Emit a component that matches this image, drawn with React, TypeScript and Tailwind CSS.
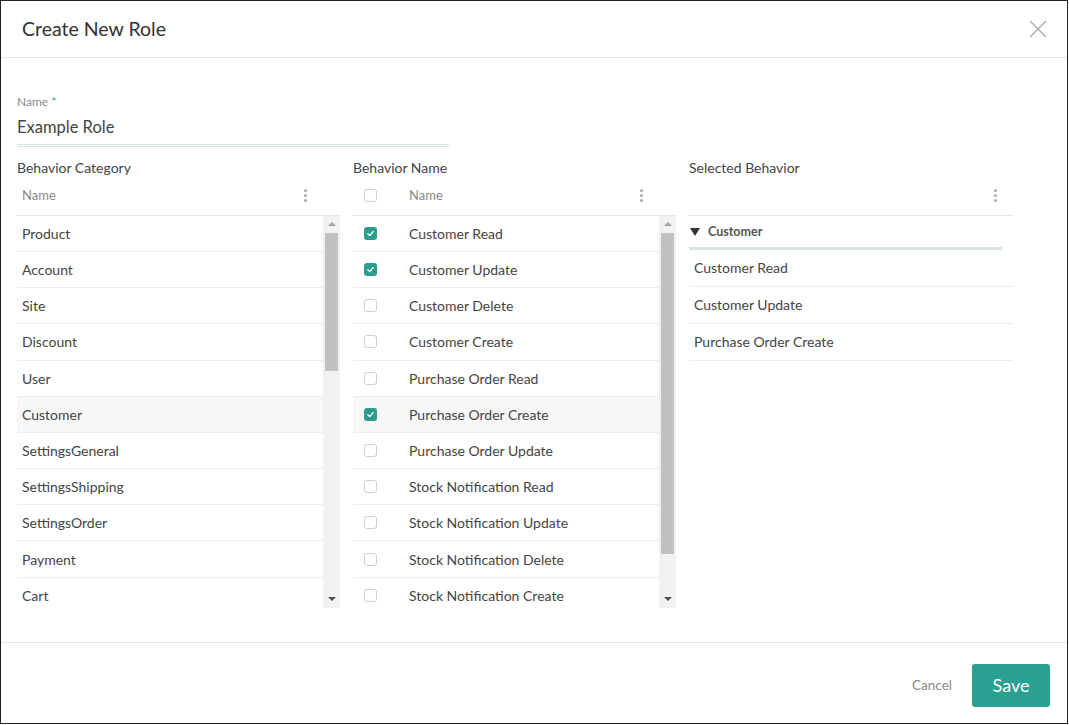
import { X } from "lucide-react";

const categories = [
  "Product",
  "Account",
  "Site",
  "Discount",
  "User",
  "Customer",
  "SettingsGeneral",
  "SettingsShipping",
  "SettingsOrder",
  "Payment",
  "Cart",
];

const behaviors = [
  { name: "Customer Read", checked: true },
  { name: "Customer Update", checked: true },
  { name: "Customer Delete", checked: false },
  { name: "Customer Create", checked: false },
  { name: "Purchase Order Read", checked: false },
  { name: "Purchase Order Create", checked: true },
  { name: "Purchase Order Update", checked: false },
  { name: "Stock Notification Read", checked: false },
  { name: "Stock Notification Update", checked: false },
  { name: "Stock Notification Delete", checked: false },
  { name: "Stock Notification Create", checked: false },
];

const selected = ["Customer Read", "Customer Update", "Purchase Order Create"];

function Kebab() {
  return (
    <div className="flex flex-col gap-[2px]">
      <span className="h-[3px] w-[3px] rounded-full bg-[#aaa]" />
      <span className="h-[3px] w-[3px] rounded-full bg-[#aaa]" />
      <span className="h-[3px] w-[3px] rounded-full bg-[#aaa]" />
    </div>
  );
}

function Checkbox({ checked }: { checked: boolean }) {
  if (checked) {
    return (
      <span className="flex h-[13px] w-[13px] items-center justify-center rounded-[3px] bg-[#2a9d8f]">
        <svg width="9" height="9" viewBox="0 0 10 10" fill="none">
          <path d="M2 5.2 L4.2 7.3 L8 2.8" stroke="white" strokeWidth="1.4" strokeLinecap="round" strokeLinejoin="round" />
        </svg>
      </span>
    );
  }
  return <span className="h-[13px] w-[13px] rounded-[3px] border border-[#cfcfcf] bg-white" />;
}

function Scrollbar({ thumbTop, thumbHeight }: { thumbTop: number; thumbHeight: number }) {
  return (
    <div className="relative w-[17px] bg-[#f1f1f1]">
      <div className="flex h-[17px] items-center justify-center">
        <span className="h-0 w-0 border-x-[4px] border-b-[4px] border-x-transparent border-b-[#a3a3a3]" />
      </div>
      <div
        className="absolute left-[2px] right-[2px] bg-[#c1c1c1]"
        style={{ top: thumbTop, height: thumbHeight }}
      />
      <div className="absolute bottom-0 left-0 flex h-[17px] w-full items-center justify-center">
        <span className="h-0 w-0 border-x-[4px] border-t-[4px] border-x-transparent border-t-[#505050]" />
      </div>
    </div>
  );
}

export default function App() {
  return (
    <div
      className="flex h-[724px] w-[1068px] flex-col border border-[#222] bg-white text-[#444]"
      style={{ fontFamily: "Lato, 'Noto Sans', sans-serif" }}
    >
      {/* header */}
      <div className="flex h-[57px] shrink-0 items-center justify-between border-b border-[#e6e6e6] pl-[21px] pr-[14px]">
        <h1 className="text-[19.5px] text-[#333]">Create New Role</h1>
        <X className="h-[30px] w-[30px] text-[#aaa]" strokeWidth={1.1} />
      </div>

      {/* body */}
      <div className="flex-1 px-[16px] pt-[30px]">
        <div className="w-[432px]">
          <label className="text-[12px] text-[#888]">
            Name <span className="text-[#2a9d8f]">*</span>
          </label>
          <div className="mt-[3px] border-b-[3px] border-double border-[#cfe7e6] pb-[4px] text-[16.5px] text-[#444]">
            Example Role
          </div>
        </div>

        <div className="mt-[10px] flex gap-[13px]">
          {/* Behavior Category */}
          <div className="w-[323px]">
            <div className="text-[14px] text-[#444]">Behavior Category</div>
            <div className="flex h-[38px] items-center justify-between border-b border-[#e6e6e6] pb-[2px] pl-[5px] pr-[33px] text-[13px] text-[#888]">
              <span>Name</span>
              <Kebab />
            </div>
            <div className="flex h-[392px]">
              <div className="flex-1 overflow-hidden">
                {categories.map((c) => (
                  <div
                    key={c}
                    className={`flex h-[36.2px] items-center border-b border-[#ececec] pl-[5px] text-[14px] text-[#444] ${
                      c === "Customer" ? "bg-[#f7f7f7]" : ""
                    }`}
                  >
                    {c}
                  </div>
                ))}
              </div>
              <Scrollbar thumbTop={17} thumbHeight={138} />
            </div>
          </div>

          {/* Behavior Name */}
          <div className="w-[323px]">
            <div className="text-[14px] text-[#444]">Behavior Name</div>
            <div className="flex h-[38px] items-center justify-between border-b border-[#e6e6e6] pb-[2px] pl-[11px] pr-[33px] text-[13px] text-[#888]">
              <div className="flex items-center gap-[32px]">
                <Checkbox checked={false} />
                <span>Name</span>
              </div>
              <Kebab />
            </div>
            <div className="flex h-[392px]">
              <div className="flex-1 overflow-hidden">
                {behaviors.map((b) => (
                  <div
                    key={b.name}
                    className={`flex h-[36.2px] items-center gap-[32px] border-b border-[#ececec] pl-[11px] text-[14px] text-[#444] ${
                      b.name === "Purchase Order Create" ? "bg-[#f7f7f7]" : ""
                    }`}
                  >
                    <Checkbox checked={b.checked} />
                    <span>{b.name}</span>
                  </div>
                ))}
              </div>
              <Scrollbar thumbTop={17} thumbHeight={321} />
            </div>
          </div>

          {/* Selected Behavior */}
          <div className="w-[324px]">
            <div className="text-[14px] text-[#444]">Selected Behavior</div>
            <div className="flex h-[38px] items-center justify-end border-b border-[#e6e6e6] pb-[2px] pr-[16px]">
              <Kebab />
            </div>
            <div className="mr-[11px] flex h-[34px] items-center gap-[8px] border-b-[3px] border-[#d8e2e2] pl-[1px] pt-[2px] text-[12.5px] font-bold text-[#555]">
              <span className="h-0 w-0 border-x-[5px] border-t-[8px] border-x-transparent border-t-[#333]" />
              Customer
            </div>
            {selected.map((s) => (
              <div
                key={s}
                className="flex h-[37px] items-center border-b border-[#ececec] pl-[5px] text-[14px] text-[#444]"
              >
                {s}
              </div>
            ))}
          </div>
        </div>
      </div>

      {/* footer */}
      <div className="flex h-[81px] shrink-0 items-center justify-end gap-[20px] border-t border-[#e6e6e6] pr-[17px] pt-[4px]">
        <button className="text-[13.5px] text-[#888]">Cancel</button>
        <button className="h-[43px] w-[78px] rounded-[3px] bg-[#2aa090] text-[18px] text-white">
          Save
        </button>
      </div>
    </div>
  );
}
